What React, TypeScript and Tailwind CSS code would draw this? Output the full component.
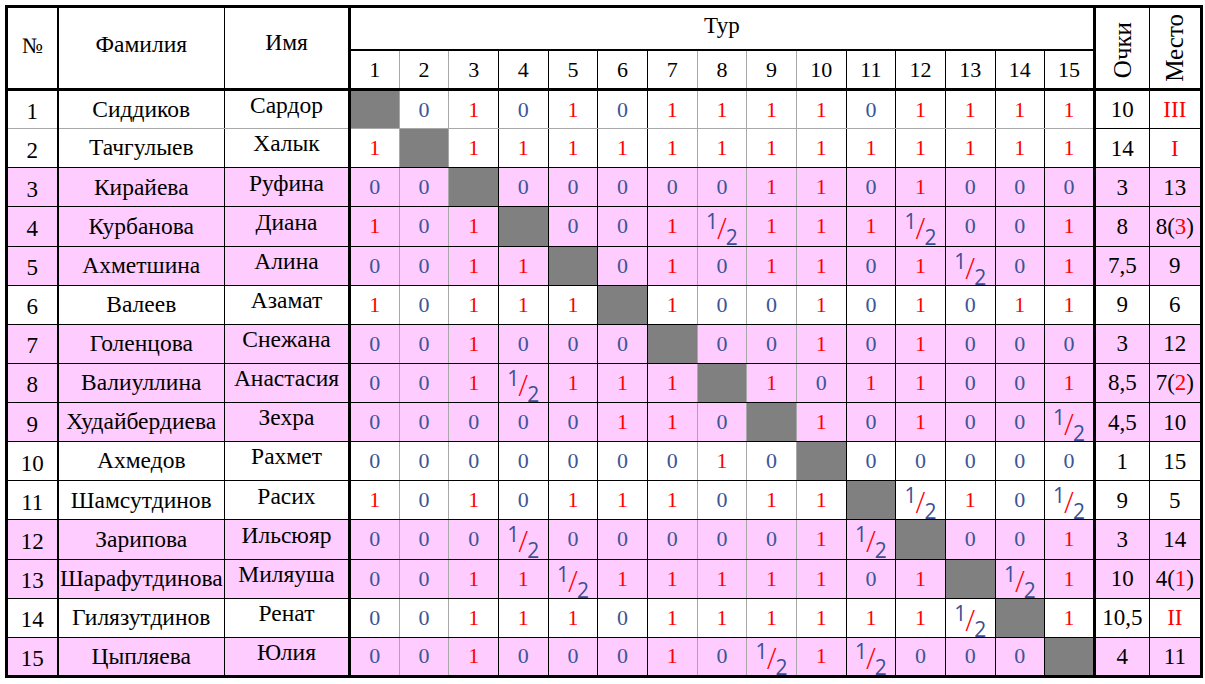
import React from "react";

const rows: [string, string, string, string, React.ReactNode, boolean][] = [
  ["Сиддиков", "Сардор", "X01010111101111", "10", <span className="text-[#ff0000]">III</span>, false],
  ["Тачгулыев", "Халык", "1X1111111111111", "14", <span className="text-[#ff0000]">I</span>, false],
  ["Кирайева", "Руфина", "00X000001101000", "3", "13", true],
  ["Курбанова", "Диана", "101X001h111h001", "8", <>8(<span className="text-[#ff0000]">3</span>)</>, true],
  ["Ахметшина", "Алина", "0011X0101101h01", "7,5", "9", true],
  ["Валеев", "Азамат", "10111X100101011", "9", "6", false],
  ["Голенцова", "Снежана", "001000X00101000", "3", "12", true],
  ["Валиуллина", "Анастасия", "001h111X1011001", "8,5", <>7(<span className="text-[#ff0000]">2</span>)</>, true],
  ["Худайбердиева", "Зехра", "00000110X10100h", "4,5", "10", true],
  ["Ахмедов", "Рахмет", "000000010X00000", "1", "15", false],
  ["Шамсутдинов", "Расих", "1010111011Xh10h", "9", "5", false],
  ["Зарипова", "Ильсюяр", "000h000001hX001", "3", "14", true],
  ["Шарафутдинова", "Миляуша", "0011h1111101Xh1", "10", <>4(<span className="text-[#ff0000]">1</span>)</>, true],
  ["Гилязутдинов", "Ренат", "001110111111hX1", "10,5", <span className="text-[#ff0000]">II</span>, false],
  ["Цыпляева", "Юлия", "00100010h1h000X", "4", "11", true],
];

// tour columns whose right edge is drawn in light gray
const grayRight = [1, 2, 7, 8, 9];

function Half() {
  return (
    <span className="inline-flex items-start h-[33px] [font-family:'Open_Sans','Lato',sans-serif] text-[21px] leading-none translate-y-[2px]">
      <span className="text-[#3b4f95] -mt-[1px]">1</span>
      <span className="text-[#ff0000] text-[29px] font-light mt-[1px] -mx-[1px]">/</span>
      <span className="text-[#3b4f95] self-end -mb-[3px]">2</span>
    </span>
  );
}

function Score({ v }: { v: string }) {
  if (v === "h") return <Half />;
  if (v === "1") return <span className="text-[#ff0000]">1</span>;
  return <span className="text-[#3b5597]">0</span>;
}

export default function App() {
  return (
    <div className="bg-white w-[1205px] h-[684px] pt-[5px] pl-[5px] [font-family:'Liberation_Serif','Times_New_Roman',serif] text-[22px] text-black">
      <table className="table-fixed border-collapse border-[3px] border-black w-[1195px]">
        <colgroup>
          <col className="w-[51px]" />
          <col className="w-[167px]" />
          <col className="w-[125px]" />
          {Array.from({ length: 15 }, (_, i) => (
            <col key={i} className="w-[49.67px]" />
          ))}
          <col className="w-[55px]" />
          <col className="w-[52px]" />
        </colgroup>
        <thead>
          <tr className="h-[43px]">
            <th rowSpan={2} className="font-normal border-black border-r-2 border-b-[3px] pb-[6px]">№</th>
            <th rowSpan={2} className="font-normal text-[23.5px] border border-black border-b-[3px] pb-[6px]">Фамилия</th>
            <th rowSpan={2} className="font-normal text-[23.5px] border border-black border-r-[3px] border-b-[3px] pb-[10px]">Имя</th>
            <th colSpan={15} className="font-normal text-[23px] border-black border-b-2 pb-[4px]">Тур</th>
            <th rowSpan={2} className="font-normal border-black border-l-[3px] border-r border-b-[3px] align-middle">
              <div className="flex items-center justify-center pt-[4px]">
                <span className="[writing-mode:vertical-rl] rotate-180 leading-none text-[25px]">Очки</span>
              </div>
            </th>
            <th rowSpan={2} className="font-normal border-black border-b-[3px] align-middle">
              <div className="flex items-center justify-center">
                <span className="[writing-mode:vertical-rl] rotate-180 leading-none text-[25px]">Место</span>
              </div>
            </th>
          </tr>
          <tr className="h-[40px]">
            {Array.from({ length: 15 }, (_, i) => (
              <th
                key={i}
                className={`font-normal border border-black border-b-[3px] ${grayRight.includes(i + 1) ? "border-r-[#a8a8a8]" : ""}`}
              >
                {i + 1}
              </th>
            ))}
          </tr>
        </thead>
        <tbody>
          {rows.map(([last, first, res, pts, place, pink], r) => {
            const bg = pink ? "bg-[#ffccff]" : "bg-white";
            const bottom = r === 0 ? "border-b-[#a8a8a8]" : "";
            return (
              <tr key={r} className={`h-[39.13px] ${bg}`}>
                <td className={`text-center text-[23px] border border-black border-r-2 pt-[4px] leading-none ${bottom}`}>{r + 1}</td>
                <td className={`text-center text-[23.5px] border border-black leading-none whitespace-nowrap ${bottom}`}>{last}</td>
                <td className={`text-center text-[23.5px] border border-black border-r-[3px] pb-[8px] leading-none whitespace-nowrap ${bottom}`}>{first}</td>
                {res.split("").map((v, c) => (
                  <td
                    key={c}
                    className={`text-center leading-none border border-black ${grayRight.includes(c + 1) ? "border-r-[#a8a8a8]" : ""} ${bottom} ${v === "X" ? "bg-[#808080]" : ""}`}
                  >
                    {v === "X" ? null : <Score v={v} />}
                  </td>
                ))}
                <td className="text-center text-[23px] border border-black border-l-[3px] leading-none">{pts}</td>
                <td className="text-center text-[23px] border border-black leading-none">{place}</td>
              </tr>
            );
          })}
        </tbody>
      </table>
    </div>
  );
}
